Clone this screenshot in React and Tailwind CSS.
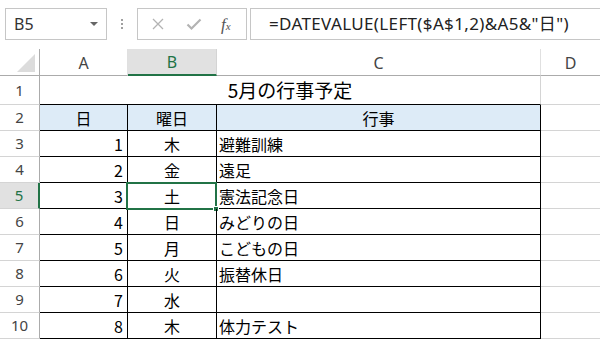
import React from 'react';

const rows = [
  { n: 3, d: 1, w: '木', e: '避難訓練' },
  { n: 4, d: 2, w: '金', e: '遠足' },
  { n: 5, d: 3, w: '土', e: '憲法記念日' },
  { n: 6, d: 4, w: '日', e: 'みどりの日' },
  { n: 7, d: 5, w: '月', e: 'こどもの日' },
  { n: 8, d: 6, w: '火', e: '振替休日' },
  { n: 9, d: 7, w: '水', e: '' },
  { n: 10, d: 8, w: '木', e: '体力テスト' },
];

const jp = "font-['Noto_Sans_CJK_JP',sans-serif]";
const ui = "font-['Noto_Sans','Noto_Sans_CJK_JP',sans-serif]";

const RowHead = ({ children, active, h = 'h-[26px]' }) => (
  <div
    className={`${h} flex items-center justify-center border-b border-[#d4d4d4] text-[15px] ${ui} ${
      active
        ? 'bg-[#e1e1e1] text-[#217346] border-r-2 border-r-[#217346]'
        : 'bg-white text-[#444] border-r border-r-[#ababab]'
    }`}
  >
    {children}
  </div>
);

export default function App() {
  return (
    <div className="w-[600px] h-[341px] overflow-hidden bg-white select-none">
      {/* Formula bar */}
      <div className="h-[49px] flex items-start pt-[8px]">
        <div className="ml-[5px] w-[102px] h-[32px] border border-[#c6c6c6] flex items-center justify-between pl-[8px] pr-[8px]">
          <span className={`text-[16px] text-[#333] ${ui}`}>B5</span>
          <span className="w-0 h-0 border-l-[4px] border-r-[4px] border-t-[4px] border-l-transparent border-r-transparent border-t-[#666]" />
        </div>
        <div className="w-[30px] h-[32px] flex flex-col items-center justify-center gap-[2px]">
          <span className="w-[2px] h-[2px] bg-[#a0a0a0]" />
          <span className="w-[2px] h-[2px] bg-[#a0a0a0]" />
          <span className="w-[2px] h-[2px] bg-[#a0a0a0]" />
        </div>
        <div className="w-[110px] h-[32px] border border-[#c6c6c6] flex items-center">
          <svg width="14" height="14" viewBox="0 0 14 14" className="ml-[13px]">
            <path d="M2 2 L12 12 M12 2 L2 12" stroke="#b3b3b3" strokeWidth="1.3" />
          </svg>
          <svg width="16" height="14" viewBox="0 0 16 14" className="ml-[21px]">
            <path d="M1.5 7.5 L5.5 11.5 L14.5 2.5" stroke="#b3b3b3" strokeWidth="2.2" fill="none" />
          </svg>
          <span className="ml-[19px] font-['Liberation_Serif',serif] italic text-[#555] leading-none">
            <span className="text-[17px]">f</span>
            <span className="text-[11px]">x</span>
          </span>
        </div>
        <div className="ml-[3px] flex-1 h-[32px] border border-[#c6c6c6] border-r-0 flex items-center pl-[18px]">
          <span className={`text-[17px] tracking-[0.35px] text-[#222] whitespace-nowrap ${ui}`}>
            =DATEVALUE(LEFT($A$1,2)&amp;A5&amp;"日")
          </span>
        </div>
      </div>

      {/* Sheet */}
      <div className="grid grid-cols-[40px_88px_89px_324px_1fr]">
        {/* column headers */}
        <div className="h-[27px] border-r border-r-[#ababab] border-b border-b-[#ababab] flex items-end justify-end pr-[4px] pb-[3px]">
          <svg width="18" height="18" viewBox="0 0 18 18">
            <path d="M18 0 L18 18 L0 18 Z" fill="#dcdcdc" />
          </svg>
        </div>
        <div className={`h-[27px] pt-[1px] border-r border-r-[#e0e0e0] border-b border-b-[#ababab] flex items-center justify-center text-[16px] text-[#444] ${ui}`}>A</div>
        <div className={`h-[27px] pt-[1px] bg-[#e1e1e1] border-r border-r-[#d4d4d4] border-b-2 border-b-[#217346] flex items-center justify-center text-[16px] text-[#217346] ${ui}`}>B</div>
        <div className={`h-[27px] pt-[1px] border-r border-r-[#e0e0e0] border-b border-b-[#ababab] flex items-center justify-center text-[16px] text-[#444] ${ui}`}>C</div>
        <div className={`h-[27px] pt-[1px] border-b border-b-[#ababab] flex items-center justify-center text-[16px] text-[#444] ${ui}`}>D</div>

        {/* row 1 */}
        <RowHead h="h-[29px]">1</RowHead>
        <div className={`col-span-3 h-[29px] border-r border-r-[#d4d4d4] border-b border-b-black flex items-center justify-center text-[19px] text-black ${jp}`}>
          5月の行事予定
        </div>
        <div className="h-[29px] border-b border-[#d4d4d4]" />

        {/* row 2 */}
        <RowHead>2</RowHead>
        <div className={`h-[26px] bg-[#ddebf7] border-r border-b border-black flex items-center justify-center text-[16px] ${jp}`}>日</div>
        <div className={`h-[26px] bg-[#ddebf7] border-r border-b border-black flex items-center justify-center text-[16px] ${jp}`}>曜日</div>
        <div className={`h-[26px] bg-[#ddebf7] border-r border-b border-black flex items-center justify-center text-[16px] ${jp}`}>行事</div>
        <div className="h-[26px] border-b border-[#d4d4d4]" />

        {rows.map((r) => {
          const sel = r.n === 5;
          return (
            <React.Fragment key={r.n}>
              <RowHead active={sel}>{r.n}</RowHead>
              <div className={`h-[26px] border-r border-b border-black flex items-center justify-end pr-[4px] text-[16px] ${jp}`}>{r.d}</div>
              <div className={`relative h-[26px] border-r border-b border-black flex items-center justify-center text-[16px] ${jp}`}>
                {r.w}
                {sel && (
                  <>
                    <div className="absolute -left-[2px] -top-[1px] w-[91px] h-[28px] border-2 border-[#217346]" />
                    <div className="absolute -right-[3px] -bottom-[4px] w-[6px] h-[6px] bg-[#217346] border border-white" />
                  </>
                )}
              </div>
              <div className={`h-[26px] border-r border-b border-black flex items-center pl-[2px] text-[16px] ${jp}`}>{r.e}</div>
              <div className="h-[26px] border-b border-[#d4d4d4]" />
            </React.Fragment>
          );
        })}
      </div>
    </div>
  );
}
